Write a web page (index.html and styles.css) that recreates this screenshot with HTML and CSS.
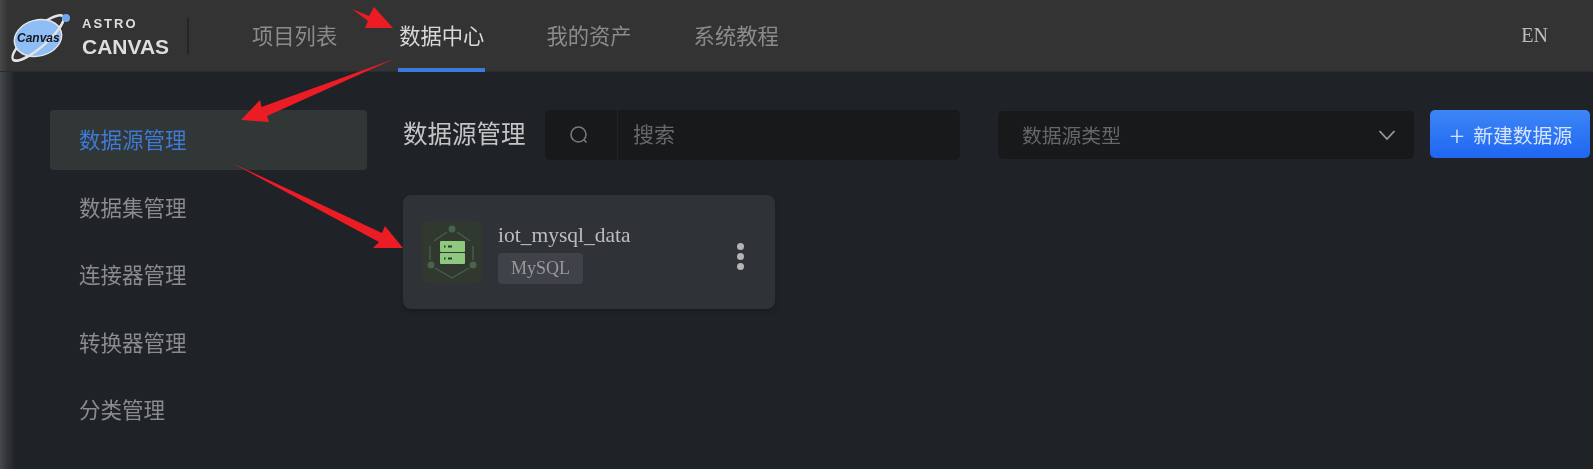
FILE: index.html
```html
<!DOCTYPE html>
<html lang="zh-CN">
<head>
  <meta charset="UTF-8">
  <title>数据源管理</title>
  <link rel="stylesheet" href="styles.css">
</head>
<body>
  <div class="page">
    <header class="topbar">
      <div class="logo">
        <svg class="logo-mark" width="64" height="60" viewBox="0 0 64 60">
          <g transform="rotate(-41 29 31)" fill="none" stroke="#e4e4e4" stroke-width="2.4">
            <ellipse cx="29" cy="31" rx="33" ry="9"/>
          </g>
          <ellipse cx="29" cy="31" rx="24" ry="18" transform="rotate(-15 29 31)" fill="#8fbdf5" stroke="#e4e4e4" stroke-width="1.5"/>
          <g transform="rotate(-41 29 31)" fill="none" stroke="#e4e4e4" stroke-width="2.4">
            <path d="M-4 31A33 9 0 0 0 62 31"/>
          </g>
          <circle cx="57" cy="11" r="4" fill="#6ea6f0"/>
          <text x="8" y="35" class="logo-canvas">Canvas</text>
        </svg>
        <div class="logo-text">
          <span class="logo-astro">ASTRO</span>
          <span class="logo-name">CANVAS</span>
        </div>
      </div>
      <nav class="nav">
        <a class="nav-item">项目列表</a>
        <a class="nav-item active">数据中心</a>
        <a class="nav-item">我的资产</a>
        <a class="nav-item">系统教程</a>
      </nav>
      <span class="lang">EN</span>
    </header>

    <div class="main">
      <ul class="sidebar">
        <li class="active">数据源管理</li>
        <li>数据集管理</li>
        <li>连接器管理</li>
        <li>转换器管理</li>
        <li>分类管理</li>
      </ul>

      <div class="content">
        <div class="toolbar">
          <h1 class="title">数据源管理</h1>
          <div class="search">
            <span class="search-icon">
              <svg width="22" height="22" viewBox="0 0 22 22" fill="none" stroke="#77797b" stroke-width="1.6">
                <circle cx="10.5" cy="10.5" r="7.5"/>
                <path d="M16 16l2.5 2.5"/>
              </svg>
            </span>
            <span class="search-text">搜索</span>
          </div>
          <div class="select">
            <span class="select-text">数据源类型</span>
            <svg width="18" height="12" viewBox="0 0 18 12" fill="none" stroke="#9a9b9c" stroke-width="1.8">
              <path d="M1.5 2l7.5 8 7.5-8"/>
            </svg>
          </div>
          <button class="btn-new"><span class="plus">+</span>新建数据源</button>
        </div>

        <div class="card">
          <div class="card-icon">
            <svg width="60" height="62" viewBox="0 0 60 62">
              <path d="M25 11L12 20M8 25V39M13 47L30 57L47 47M51 39V25M48 20L35 11" fill="none" stroke="#45604a" stroke-width="1.4"/>
              <circle cx="30" cy="8" r="3.5" fill="#47634a"/>
              <circle cx="9" cy="44" r="3.5" fill="#47634a"/>
              <circle cx="51" cy="44" r="3.5" fill="#47634a"/>
              <rect x="18" y="20" width="25" height="11" rx="1" fill="#8ec97f"/>
              <rect x="18" y="32" width="25" height="11" rx="1" fill="#8ec97f"/>
              <path d="M22 25.5h1.5M26 25.5h4M22 37.5h1.5M26 37.5h4" stroke="#2c3a2a" stroke-width="2"/>
            </svg>
          </div>
          <div class="card-info">
            <div class="card-name">iot_mysql_data</div>
            <span class="tag">MySQL</span>
          </div>
          <div class="more"><i></i><i></i><i></i></div>
        </div>
      </div>
    </div>

    <svg class="arrows" width="1593" height="469" viewBox="0 0 1593 469">
      <polygon points="352,9 369,16 374,7 393,28 365,28 368,21"/>
      <polygon points="394,59 267,116 269,122 241,120 260,100 261.5,107"/>
      <polygon points="232,163 382,233 385,226 403,248 373,248 379,242"/>
    </svg>
  </div>
</body>
</html>
```

FILE: styles.css
```css
* {
  margin: 0;
  padding: 0;
  box-sizing: border-box;
  list-style: none;
}
html, body {
  width: 1593px;
  height: 469px;
  overflow: hidden;
  background: #1f2227;
}
body {
  font-family: "Noto Sans CJK SC", "Liberation Sans", sans-serif;
}
.page {
  position: relative;
  width: 1593px;
  height: 469px;
  display: flex;
  flex-direction: column;
  background: linear-gradient(90deg, #47494c 0, #34373a 6px, #1f2227 15px);
  filter: blur(0.7px);
}

/* top bar */
.topbar {
  height: 72px;
  display: flex;
  align-items: center;
  padding-right: 45px;
  background: linear-gradient(90deg, #484848 0, #333 8px), #333;
  border-bottom: 1px solid #2a2b2d;
}
.logo {
  width: 189px;
  height: 36px;
  display: flex;
  align-items: center;
  border-right: 2px solid #252525;
  margin-right: 62px;
  flex-shrink: 0;
}
.logo-mark {
  flex-shrink: 0;
  margin-left: 9px;
  margin-top: 2px;
  overflow: visible;
}
.logo-canvas {
  font-family: "Liberation Sans", sans-serif;
  font-size: 12px;
  font-weight: 700;
  font-style: italic;
  fill: #14161c;
}
.logo-text {
  display: flex;
  flex-direction: column;
  margin-left: 9px;
  color: #dedede;
  font-family: "Liberation Sans", sans-serif;
  font-weight: 700;
}
.logo-astro {
  font-size: 13px;
  line-height: 14px;
  letter-spacing: 2px;
  margin-top: 4px;
}
.logo-name {
  font-size: 21px;
  line-height: 24px;
  margin-top: 4px;
}
.nav {
  display: flex;
  gap: 60px;
  height: 100%;
}
.nav-item {
  display: flex;
  align-items: center;
  padding: 1px 1px 0;
  height: 72px;
  font-size: 21.3px;
  color: #8b8b8b;
  border-bottom: 4px solid transparent;
}
.nav-item.active {
  color: #d8d8d8;
  border-bottom-color: #3d7ae0;
}
.lang {
  margin-left: auto;
  color: #bdbdbd;
  font-family: "Liberation Serif", serif;
  font-size: 20px;
}

/* main area */
.main {
  flex: 1;
  display: flex;
  padding: 38px 3px 0 50px;
}
.sidebar {
  width: 317px;
  display: flex;
  flex-direction: column;
  gap: 7.5px;
  flex-shrink: 0;
}
.sidebar li {
  height: 60px;
  line-height: 58px;
  padding-left: 29px;
  font-size: 21.5px;
  color: #8a8b8c;
  border-radius: 4px;
}
.sidebar li.active {
  background: #303736;
  color: #3f7ad6;
}
.content {
  flex: 1;
  margin-left: 36px;
}
.toolbar {
  display: flex;
  align-items: center;
  height: 50px;
}
.title {
  width: 122px;
  margin-right: 20px;
  padding-bottom: 5px;
  font-size: 24.5px;
  font-weight: 400;
  color: #c4c4c4;
  white-space: nowrap;
}
.search {
  width: 415px;
  height: 50px;
  display: flex;
  align-items: center;
  background: #18191b;
  border-radius: 5px;
}
.search-icon {
  width: 73px;
  height: 100%;
  display: flex;
  align-items: center;
  justify-content: center;
  border-right: 1px solid #222326;
  padding: 0 4px 1px 0;
}
.search-text {
  margin-left: 15px;
  padding-bottom: 5px;
  font-size: 21px;
  color: #69696b;
}
.select {
  width: 416px;
  height: 48px;
  margin-left: 38px;
  padding: 0 18px 0 24px;
  display: flex;
  align-items: center;
  justify-content: space-between;
  background: #18191b;
  border-radius: 5px;
  font-size: 19.8px;
  color: #66676a;
}
.select-text {
  padding-bottom: 2px;
}
.btn-new {
  width: 160px;
  height: 48px;
  margin-left: 16px;
  padding-left: 2px;
  align-self: flex-start;
  border: 0;
  border-radius: 5px;
  background: linear-gradient(180deg, #3c86f6, #1f66f2);
  color: #d5e4fb;
  font-family: inherit;
  font-size: 19.8px;
  display: flex;
  align-items: center;
  justify-content: center;
}
.plus {
  font-size: 27px;
  font-weight: 300;
  margin-right: 9px;
  line-height: 1;
}
.card {
  width: 372px;
  height: 114px;
  margin-top: 35px;
  padding: 0 31px 0 19px;
  display: flex;
  align-items: center;
  background: #2f3237;
  border-radius: 8px;
  box-shadow: 0 3px 4px rgba(0, 0, 0, .18);
}
.card-icon {
  width: 60px;
  height: 62px;
  background: #30382f;
  border-radius: 4px;
}
.card-info {
  margin-left: 16px;
  flex: 1;
  padding-top: 3px;
}
.card-name {
  font-family: "Liberation Serif", serif;
  font-size: 21.5px;
  line-height: 24px;
  color: #bcbcbc;
}
.tag {
  display: inline-block;
  height: 31px;
  line-height: 30px;
  padding: 0 13px;
  margin-top: 6px;
  background: #40424a;
  border-radius: 4px;
  font-family: "Liberation Serif", serif;
  font-size: 18px;
  color: #999;
}
.more {
  display: flex;
  flex-direction: column;
  gap: 3px;
  margin-top: 8px;
}
.more i {
  width: 7px;
  height: 7px;
  border-radius: 50%;
  background: #b4b4b4;
}

/* red annotation arrows lying over the page */
.arrows {
  position: absolute;
  left: 0;
  top: 0;
  pointer-events: none;
}
.arrows polygon {
  fill: #ec1c24;
}
```
